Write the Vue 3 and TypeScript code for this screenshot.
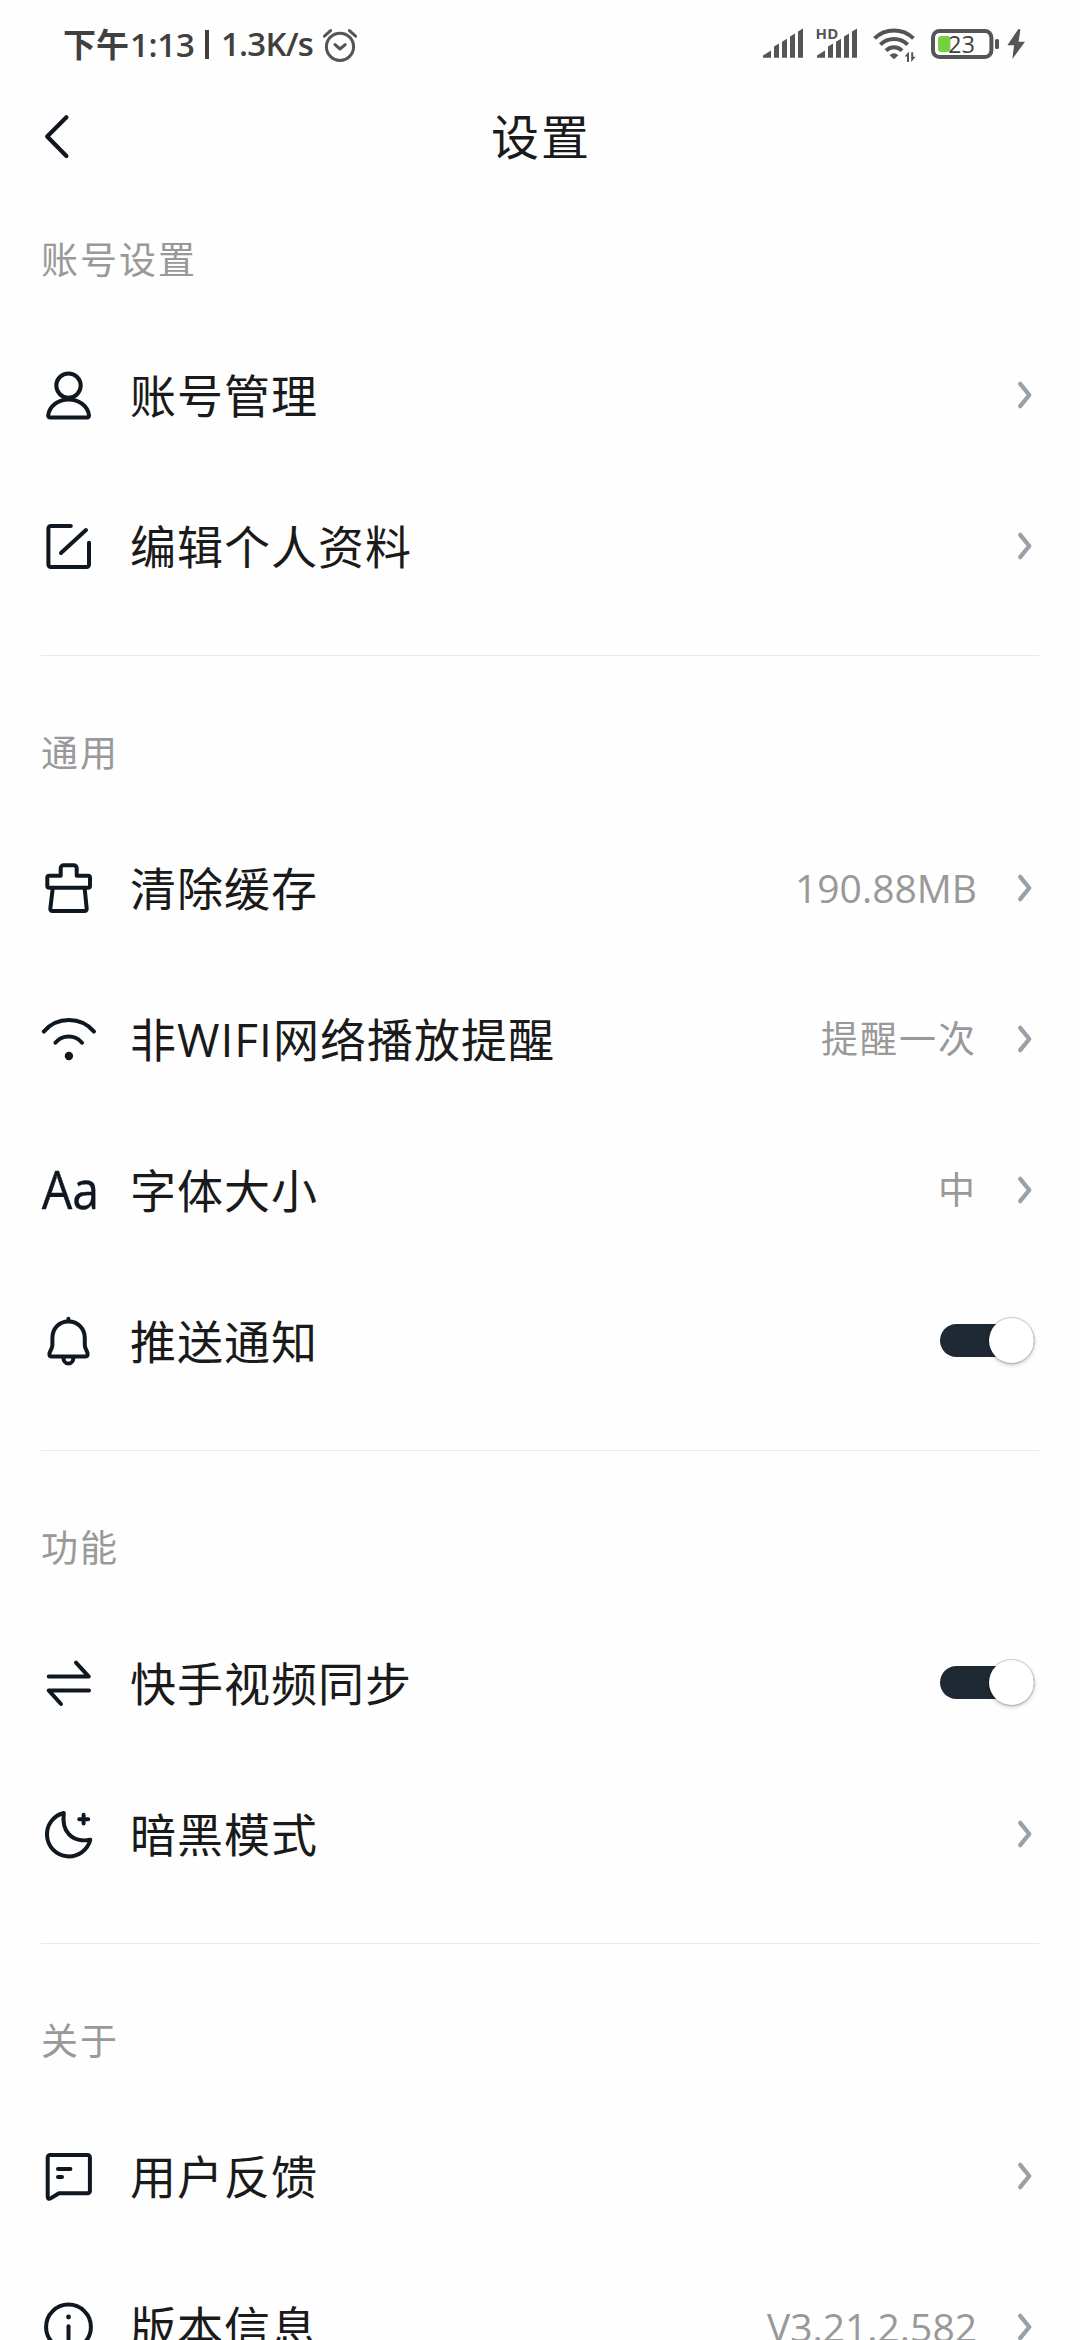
<script setup lang="ts">
import { reactive } from 'vue'

type IconName =
  | 'user' | 'edit' | 'brush' | 'wifi' | 'font' | 'bell'
  | 'sync' | 'moon' | 'feedback' | 'info'

interface Row {
  icon: IconName
  label: string
  value?: string
  latin?: boolean
  toggle?: boolean
}

interface Section {
  title: string
  rows: Row[]
}

const sections = reactive<Section[]>([
  {
    title: '账号设置',
    rows: [
      { icon: 'user', label: '账号管理' },
      { icon: 'edit', label: '编辑个人资料' },
    ],
  },
  {
    title: '通用',
    rows: [
      { icon: 'brush', label: '清除缓存', value: '190.88MB', latin: true },
      { icon: 'wifi', label: '非WIFI网络播放提醒', value: '提醒一次' },
      { icon: 'font', label: '字体大小', value: '中' },
      { icon: 'bell', label: '推送通知', toggle: true },
    ],
  },
  {
    title: '功能',
    rows: [
      { icon: 'sync', label: '快手视频同步', toggle: true },
      { icon: 'moon', label: '暗黑模式' },
    ],
  },
  {
    title: '关于',
    rows: [
      { icon: 'feedback', label: '用户反馈' },
      { icon: 'info', label: '版本信息', value: 'V3.21.2.582', latin: true },
    ],
  },
])

const strokes: Partial<Record<IconName, string[]>> = {
  user: [
    'M28.5 7.4a12.2 12.2 0 1 1 0 24.4a12.2 12.2 0 1 1 0-24.4Z',
    'M10.2 51.6H47a2 2 0 0 0 2-2.3C47.8 40.2 39 33.4 28.6 33.4S9.4 40.2 8.2 49.3a2 2 0 0 0 2 2.3Z',
  ],
  edit: [
    'M30.8 9H10.8a2.4 2.4 0 0 0-2.4 2.4V47.6a2.4 2.4 0 0 0 2.4 2.4H46.6a2.4 2.4 0 0 0 2.4-2.4V25.8',
    'M46 13L22.6 34.4L21 36',
  ],
  brush: [
    'M7.3 18.7a2 2 0 0 1 2-2H20.7V9.3a3 3 0 0 1 3-3H33.7a3 3 0 0 1 3 3V16.7H48a2 2 0 0 1 2 2V26.7a2 2 0 0 1-2 2H9.3a2 2 0 0 1-2-2Z',
    'M12.8 28.7L10.3 49.8a2 2 0 0 0 2 2.2H44.7a2 2 0 0 0 2-2.2L44.6 28.7',
  ],
  wifi: ['M3.8 21.6A33 33 0 0 1 54 21.6', 'M15.4 32.7A17.4 17.4 0 0 1 42 32.7'],
  bell: [
    'M28.4 9.5C18.5 9.5 12.4 17 12.4 26V33C12.4 37 9.4 39 9.4 42C9.4 43.8 10.3 44.6 12 44.6H45C46.7 44.6 47.6 43.8 47.6 42C47.6 39 44.8 37 44.8 33V26C44.8 17 38.3 9.5 28.4 9.5Z',
    'M28.4 9V6.8',
    'M23.4 45.4a5 6.2 0 0 0 10 0',
  ],
  sync: ['M8.7 22.6H48.8L36 8.6', 'M49 36.4H8.7L21 50'],
  moon: [
    'M23.8 8A22 22 0 1 0 50.3 34.8C42 36.4 33.6 34.4 28.8 29.2C23.6 23.6 22.8 16 23.8 8Z',
    'M43.6 9.8V18.6M39.2 14.3H48.2',
  ],
  feedback: [
    'M10 8H47.6a2.3 2.3 0 0 1 2.3 2.3V43.9a2.3 2.3 0 0 1-2.3 2.3H19L10.6 51.4c-1.6 1-2.9 .2-2.9-1.6V10.3A2.3 2.3 0 0 1 10 8Z',
    'M18 22H30.4',
    'M18 30.1H22',
  ],
  info: ['M28.5 6.6a22.4 22.4 0 1 1 0 44.8a22.4 22.4 0 1 1 0-44.8Z', 'M28.5 28.2V41'],
}
</script>

<template>
  <main class="screen">
    <header class="status">
      <div class="status-left">
        <span class="clock">下午<i>1:13</i></span>
        <span class="bar"></span>
        <span class="speed">1.3K/s</span>
        <svg class="alarm" width="36" height="36" viewBox="322 27 36 36" fill="none" stroke="#555" stroke-width="3" stroke-linecap="round" stroke-linejoin="round">
          <circle cx="340" cy="45.8" r="13.6" />
          <path d="M324.4 35.2L330.6 29.6M349.4 29.6L355.6 35.2M335 43.6L340 48L345.2 43.6" />
        </svg>
      </div>
      <div class="status-right">
        <svg width="240" height="40" viewBox="760 24 240 40">
          <g fill="#555">
            <path d="M763 57.8V55.4L771 50.6V57.8ZM774 57.8V46.6L779 43.6V57.8ZM782 57.8V41.8L787 38.8V57.8ZM790 57.8V36.6L795 33.6V57.8ZM798 57.8V31.6L803 28.6V57.8Z" />
            <path d="M817 57.8V55.4L825 50.6V57.8ZM828 57.8V46.6L833 43.6V57.8ZM836 57.8V41.8L841 38.8V57.8ZM844 57.8V36.6L849 33.6V57.8ZM852 57.8V31.6L857 28.6V57.8Z" />
            <text x="815.4" y="39" class="hd" textLength="23" lengthAdjust="spacing">HD</text>
            <path d="M894 59.2L889.6 55.2Q894 51.4 898.4 55.2Z" />
            <path d="M904.6 56.6L909 51.6V62H907V56.6ZM915.6 56.8L911.2 62V52.2H913.2V56.8Z" />
          </g>
          <g fill="none" stroke="#555" stroke-width="4">
            <path d="M874.6 38.4A28 28 0 0 1 913.4 38.4" />
            <path d="M880.4 44.6A19.4 19.4 0 0 1 907.6 44.6" />
            <path d="M886 50.6A11.5 11.5 0 0 1 902 50.6" />
            <rect x="933" y="31" width="58.4" height="26" rx="6.5" />
          </g>
          <rect x="995" y="39" width="4" height="10" rx="1.6" fill="#555" />
          <rect x="938" y="36" width="12.4" height="16" rx="3" fill="#76d03f" />
          <text x="948.2" y="52.6" class="level" textLength="26.6" lengthAdjust="spacing">23</text>
        </svg>
        <svg width="20" height="40" viewBox="1006 24 20 40">
          <path d="M1018.4 29L1007.4 45.2H1014L1012.4 59L1025 41.8H1018.6L1020.4 29.4Z" fill="#555" />
        </svg>
      </div>
    </header>

    <nav class="nav">
      <svg class="back" width="30" height="50" viewBox="42 111.6 30 50" fill="none" stroke="#10151e" stroke-width="4.2" stroke-linecap="round" stroke-linejoin="round">
        <path d="M66.4 116.8L47.2 136.2L66.4 155.6" />
      </svg>
      <h1>设置</h1>
    </nav>

    <section v-for="s in sections" :key="s.title" class="group">
      <h2>{{ s.title }}</h2>
      <div v-for="r in s.rows" :key="r.label" class="row">
        <svg class="icon" width="57" height="57" viewBox="0 0 57 57">
          <path v-for="d in strokes[r.icon] ?? []" :key="d" :d="d" />
          <circle v-if="r.icon === 'wifi'" class="dot" cx="28.9" cy="46" r="4.2" />
          <circle v-if="r.icon === 'info'" class="dot" cx="28.5" cy="19" r="2.4" />
          <text v-if="r.icon === 'font'" class="aa" x="1.8" y="48" textLength="57.4" lengthAdjust="spacingAndGlyphs">Aa</text>
        </svg>
        <span class="label">{{ r.label }}</span>
        <span v-if="r.value" class="value" :class="{ latin: r.latin }">{{ r.value }}</span>
        <button v-if="r.toggle" class="switch" type="button" :aria-label="r.label"><b></b></button>
        <svg v-else class="chevron" width="24" height="31" viewBox="0 0 24 31">
          <path d="M9.2 4.9L18.3 16L9.2 27.1" />
        </svg>
      </div>
    </section>
  </main>
</template>

<style>
body {
  margin: 0;
  background: #fefefe;
}
</style>

<style scoped>
.screen {
  width: 1080px;
  height: 2340px;
  overflow: hidden;
  background: #fefefe;
  font-family: 'Open Sans', 'Noto Sans CJK SC', sans-serif;
  color: #1a1a1a;
}
.status {
  height: 88px;
  box-sizing: border-box;
  padding: 0 54px 0 63px;
  display: flex;
  justify-content: space-between;
  align-items: center;
}
.status-left {
  display: flex;
  align-items: center;
  height: 88px;
  color: #404040;
  font-size: 33px;
  font-weight: 600;
  line-height: 88px;
}
.clock {
  width: 131px;
  white-space: nowrap;
  font-family: 'Noto Sans CJK SC', sans-serif;
  font-weight: 700;
}
.clock i {
  margin-left: 1px;
  letter-spacing: -0.3px;
}
.clock i,
.speed {
  font-family: 'Open Sans', sans-serif;
  font-style: normal;
  font-weight: 600;
}
.bar {
  width: 4px;
  height: 29px;
  margin-left: 11px;
  background: #404040;
}
.speed {
  width: 99px;
  margin-left: 12px;
  white-space: nowrap;
  letter-spacing: -0.8px;
}
.alarm {
  margin: 3px 0 0 2px;
}
.status-right {
  display: flex;
  gap: 6px;
}
.hd {
  font: 700 15px 'Open Sans', sans-serif;
}
.level {
  font: 400 23px 'Open Sans', sans-serif;
  fill: #404040;
}
.nav {
  height: 98px;
  display: grid;
  grid-template-columns: 30px 1fr 30px;
  align-items: center;
  padding: 0 42px;
}
h1 {
  margin: 0;
  padding-left: 2px;
  text-align: center;
  font-size: 48px;
  font-weight: 400;
  letter-spacing: 2px;
  line-height: 98px;
}
.group {
  padding-bottom: 34px;
  margin: 0 41px;
  border-bottom: 1px solid #e8e8e8;
}
.group:first-of-type h2 {
  height: 133px;
}
h2 {
  margin: 0;
  height: 156px;
  display: flex;
  align-items: flex-end;
  font-size: 37px;
  font-weight: 400;
  letter-spacing: 2px;
  line-height: 118px;
  color: #999;
}
.row {
  height: 151px;
  display: flex;
  align-items: center;
}
.icon {
  margin-left: -1px;
  overflow: visible;
  flex: none;
}
.icon path {
  fill: none;
  stroke: #0f1721;
  stroke-width: 4;
  stroke-linecap: round;
  stroke-linejoin: round;
}
.icon .dot {
  fill: #0f1721;
}
.aa {
  font: 400 53px 'Open Sans', sans-serif;
  fill: #0f1721;
  stroke: #0f1721;
  stroke-width: 0.4px;
  stroke-linejoin: round;
}
.label {
  flex: 1;
  margin-left: 33px;
  font-size: 46px;
  letter-spacing: 1px;
  line-height: 70px;
  white-space: nowrap;
}
.value {
  font-size: 37px;
  letter-spacing: 2px;
  line-height: 60px;
  color: #999;
  margin-right: 34px;
}
.value.latin {
  font-size: 39px;
  letter-spacing: 0;
}
.chevron {
  margin-right: 4px;
  flex: none;
}
.chevron path {
  fill: none;
  stroke: #99a0aa;
  stroke-width: 4.3;
  stroke-linecap: round;
  stroke-linejoin: round;
}
.switch {
  width: 94px;
  height: 33px;
  margin: 0 5px 0 0;
  padding: 0;
  border: 0;
  border-radius: 17px;
  background: #1f2933;
  display: flex;
  align-items: center;
  justify-content: flex-end;
}
.switch b {
  flex: none;
  width: 45px;
  height: 45px;
  border-radius: 50%;
  background: #fff;
  box-shadow: 0 0 1px 1px rgba(0, 0, 0, 0.18), 0 2px 4px rgba(0, 0, 0, 0.22);
}
</style>
